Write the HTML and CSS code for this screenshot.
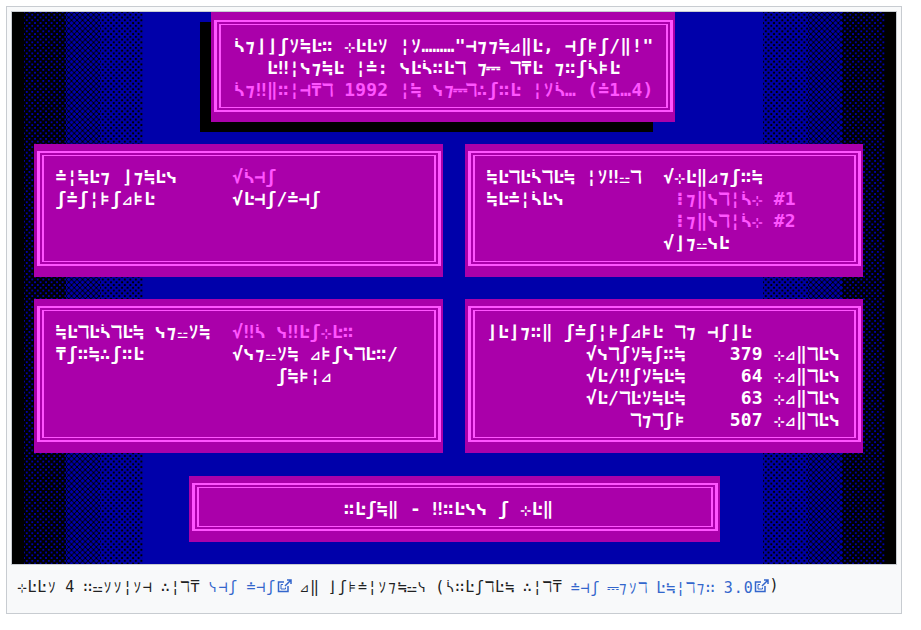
FILE: index.html
```html
<!DOCTYPE html>
<html lang="en">
<head>
    <meta charset="UTF-8">
    <title>⊹ŀŀｿ 4</title>
    <link rel="stylesheet" href="styles.css">
</head>
<body>
<figure class="figure">
    <div class="screen">
        <div class="backdrop">
            <div class="side">
                <i class="strip black edge-l"></i><i class="strip d25 w42"></i><i class="strip d50 w34"></i><i class="strip d75 w43"></i>
            </div>
            <div class="side">
                <i class="strip d75 w45"></i><i class="strip d50 w34"></i><i class="strip d25 w43"></i><i class="strip black edge-r"></i>
            </div>
        </div>

        <div class="title-wrap">
            <div class="panel title">
                <div class="frame"><div class="inner centered">
                    <div class="row">ᓵ⁊⌋⌋ʃｿ≒Ŀ∷ ⊹ĿĿｿ ¦ｿ………"⊣⁊⁊≒⊿‖Ŀ, ⊣ʃ⊧ʃ/‖!"</div>
                    <div class="row">Ŀ‼¦ᓭ⁊≒Ŀ ¦≐: ᓭĿᓵ∷Ŀℸ ⁊⎓ ℸ₸Ŀ ⁊∷ʃᓵ⊧Ŀ</div>
                    <div class="row pink">ᓵ⁊‼‖∷¦⊣₸ℸ 1992 ¦≒ ᓭ⁊⎓ℸ∴ʃ∷Ŀ ¦ｿᓵ… (≐1…4)</div>
                </div></div>
            </div>
        </div>

        <div class="info">
            <div class="panel">
                <div class="frame"><div class="inner">
                    <div class="row">≐¦≒Ŀ⁊ ⌋⁊≒Ŀᓭ     <span class="pink">√ᓵ⊣ʃ</span></div>
                    <div class="row">ʃ≐ʃ¦⊧ʃ⊿⊧Ŀ       √Ŀ⊣ʃ/≐⊣ʃ</div>
                </div></div>
            </div>
            <div class="panel">
                <div class="frame"><div class="inner">
                    <div class="row">≒ĿℸĿᓵℸĿ≒ ¦ｿ‼⚍ℸ  √⊹Ŀ‖⊿⁊ʃ∷≒</div>
                    <div class="row">≒Ŀ≐¦ᓵĿᓭ          <span class="pink">⁝⁊‖ᓭℸ¦ᓵ⊹ #1</span></div>
                    <div class="row">                 <span class="pink">⁝⁊‖ᓭℸ¦ᓵ⊹ #2</span></div>
                    <div class="row">                √⌋⁊⚍ᓭĿ</div>
                </div></div>
            </div>
            <div class="panel">
                <div class="frame"><div class="inner">
                    <div class="row">≒ĿℸĿᓵℸĿ≒ ᓭ⁊⚍ｿ≒  <span class="pink">√‼ᓵ ᓭ‼Ŀʃ⊹Ŀ∷</span></div>
                    <div class="row">₸ʃ∷≒∴ʃ∷Ŀ        √ᓭ⁊⚍ｿ≒ ⊿⊧ʃᓭℸĿ∷/</div>
                    <div class="row">                    ʃ≒⊧¦⊿</div>
                </div></div>
            </div>
            <div class="panel">
                <div class="frame"><div class="inner">
                    <div class="row">⌋Ŀ⌋⁊∷‖ ʃ≐ʃ¦⊧ʃ⊿⊧Ŀ ℸ⁊ ⊣ʃ⌋Ŀ</div>
                    <div class="row">         √ᓭℸʃｿ≒ʃ∷≒    379 ⊹⊿‖ℸĿᓭ</div>
                    <div class="row">         √Ŀ/‼ʃｿ≒Ŀ≒     64 ⊹⊿‖ℸĿᓭ</div>
                    <div class="row">         √Ŀ/ℸĿｿ≒Ŀ≒     63 ⊹⊿‖ℸĿᓭ</div>
                    <div class="row">             ℸ⁊ℸʃ⊧    507 ⊹⊿‖ℸĿᓭ</div>
                </div></div>
            </div>
        </div>

        <div class="prompt-wrap">
            <div class="panel prompt">
                <div class="frame"><div class="inner centered">
                    <div class="row">∷Ŀʃ≒‖ - ‼∷Ŀᓭᓭ ʃ ⊹Ŀ‖</div>
                </div></div>
            </div>
        </div>
    </div>
    <figcaption class="caption">
        <span class="row">⊹ĿĿｿ 4 ∷⚍ｿｿ¦ｿ⊣ ∴¦ℸ₸ </span><a class="row link" href="#">ᓭ⊣ʃ ≐⊣ʃ</a><svg class="ext" viewBox="0 0 15 15"><path d="M10 2h4v4M14 2 8 8M11 8v5.5H1.5V4H7" fill="none" stroke="#36c" stroke-width="1.5"/><path d="M4 11V6.5h2M4 11h4.5V9.5" fill="none" stroke="#36c" stroke-width="1"/></svg><span class="row"> ⊿‖ </span><span class="row">⌋ʃ⊧≐¦ｿ⁊≒⚍ᓭ (ᓵ∷ĿʃℸĿ≒ ∴¦ℸ₸ </span><a class="row link" href="#">≐⊣ʃ ⎓⁊ｿℸ Ŀ≒¦ℸ⁊∷ 3.0</a><svg class="ext" viewBox="0 0 15 15"><path d="M10 2h4v4M14 2 8 8M11 8v5.5H1.5V4H7" fill="none" stroke="#36c" stroke-width="1.5"/><path d="M4 11V6.5h2M4 11h4.5V9.5" fill="none" stroke="#36c" stroke-width="1"/></svg><span class="row">)</span>
    </figcaption>
</figure>
<script src="cells.js"></script>
</body>
</html>
```

FILE: styles.css
```css
* {
    box-sizing: border-box;
    margin: 0;
    padding: 0;
}
body {
    background-color: #fff;
}
.figure {
    width: 896px;
    height: 608px;
    margin: 6px 0 0 6px;
    padding: 4px 4px 0;
    background-color: #f8f9fa;
    border: 1px solid #c8ccd1;
}
.screen {
    position: relative;
    height: 554px;
    overflow: hidden;
    background-color: #0000aa;
    border: 1px solid #c8ccd1;
    font-family: "DejaVu Sans Mono", "DejaVu Sans", "Noto Sans CJK JP", monospace;
    font-size: 18px;
    font-weight: bold;
    color: #fff;
}

/* dithered strips at both sides of the blue */
.backdrop {
    position: absolute;
    inset: 0;
    display: flex;
    justify-content: space-between;
}
.side {
    display: flex;
}
.strip {
    display: block;
    height: 100%;
}
.black { background-color: #000; }
.edge-l { width: 12px; }
.edge-r { width: 11px; }
.w34 { width: 34px; }
.w42 { width: 42px; }
.w43 { width: 43px; }
.w45 { width: 45px; }
.d25 {
    background-color: #000;
    background-image: radial-gradient(#0000aa 0.9px, transparent 1.4px), radial-gradient(#0000aa 0.9px, transparent 1.4px);
    background-size: 5.52px 5.52px;
    background-position: 0 0, 2.76px 2.76px;
}
.d50 {
    background-color: #000;
    background-image: radial-gradient(#0000aa 1.4px, transparent 1.9px), radial-gradient(#0000aa 1.4px, transparent 1.9px);
    background-size: 5.52px 5.52px;
    background-position: 0 0, 2.76px 2.76px;
}
.d75 {
    background-color: #0000aa;
    background-image: radial-gradient(#000 1px, transparent 1.5px), radial-gradient(#000 1px, transparent 1.5px);
    background-size: 5.52px 5.52px;
    background-position: 0 0, 2.76px 2.76px;
}

/* panels */
.panel {
    position: relative;
    display: flex;
    padding: 7px 2px 11px 3px;
    background-color: #aa00aa;
}
.frame {
    flex: 1;
    display: flex;
    padding: 2px;
    border: solid #ff55ff;
    border-width: 2px 3px;
}
.inner {
    flex: 1;
    padding: 5px 10px 5px 11.5px;
    border: solid #ff55ff;
    border-width: 1px 2px;
}
.centered {
    text-align: center;
}
.title-wrap {
    position: relative;
    z-index: 1;
    padding-left: 199px;
}
.title {
    width: 464px;
    height: 110px;
    padding-top: 8px;
    padding-bottom: 10px;
}
.title::before {
    content: "";
    position: absolute;
    z-index: -1;
    left: -11px;
    right: 22px;
    top: 10px;
    bottom: -10px;
    background-color: #000;
}
.title .inner {
    padding-left: 0;
    padding-right: 0;
}
.info {
    position: relative;
    display: grid;
    grid-template-columns: 409px 398px;
    grid-template-rows: 133px 154px;
    gap: 22px;
    margin: 22px 0 0 22px;
}
.prompt-wrap {
    position: relative;
    padding: 23px 0 0 177px;
}
.prompt {
    width: 531px;
    height: 66px;
}
.prompt .inner {
    padding-left: 0;
    padding-right: 13px;
}

/* text mode rows */
.row {
    display: block;
    height: 22.1px;
    line-height: 22.1px;
    white-space: pre;
}
.pink {
    color: #ff55ff;
}
.cell {
    display: inline-flex;
    justify-content: center;
    width: 11.05px;
    height: 22.1px;
}
.wide {
    font-size: 14px;
}
.wider {
    font-size: 13px;
}

/* caption */
.caption {
    display: flex;
    align-items: center;
    height: 40px;
    padding: 0 0 0 6px;
    font-family: "DejaVu Sans Mono", "DejaVu Sans", "Noto Sans CJK JP", sans-serif;
    font-size: 15px;
    color: #202122;
}
.caption .row {
    display: inline;
    height: auto;
    line-height: 20px;
}
.caption .cell {
    width: 9.95px;
    height: 20px;
}
.caption .wide,
.caption .wider {
    font-size: 12px;
}
.caption .blank {
    width: 8px;
}
.link,
.caption .link {
    color: #3366cc;
    text-decoration: none;
}
.ext {
    width: 15px;
    height: 15px;
    margin-left: 1px;
    flex: none;
}
```

FILE: cells.js
```js
// the text is on a fixed character grid, so every character gets its own cell
function toCells(el) {
    Array.from(el.childNodes).forEach(node => {
        if (node.nodeType !== 3) {
            toCells(node);
            return;
        }
        const frag = document.createDocumentFragment();
        Array.from(node.textContent).forEach(ch => {
            const cell = document.createElement('span');
            cell.className = 'cell';
            if (ch === ' ') cell.classList.add('blank');
            if ('ᓭᓵ'.includes(ch)) cell.classList.add('wide');
            if ('⊿⊹⚍'.includes(ch)) cell.classList.add('wider');
            cell.textContent = ch;
            frag.appendChild(cell);
        });
        node.replaceWith(frag);
    });
}

document.querySelectorAll('.row').forEach(toCells);
```
